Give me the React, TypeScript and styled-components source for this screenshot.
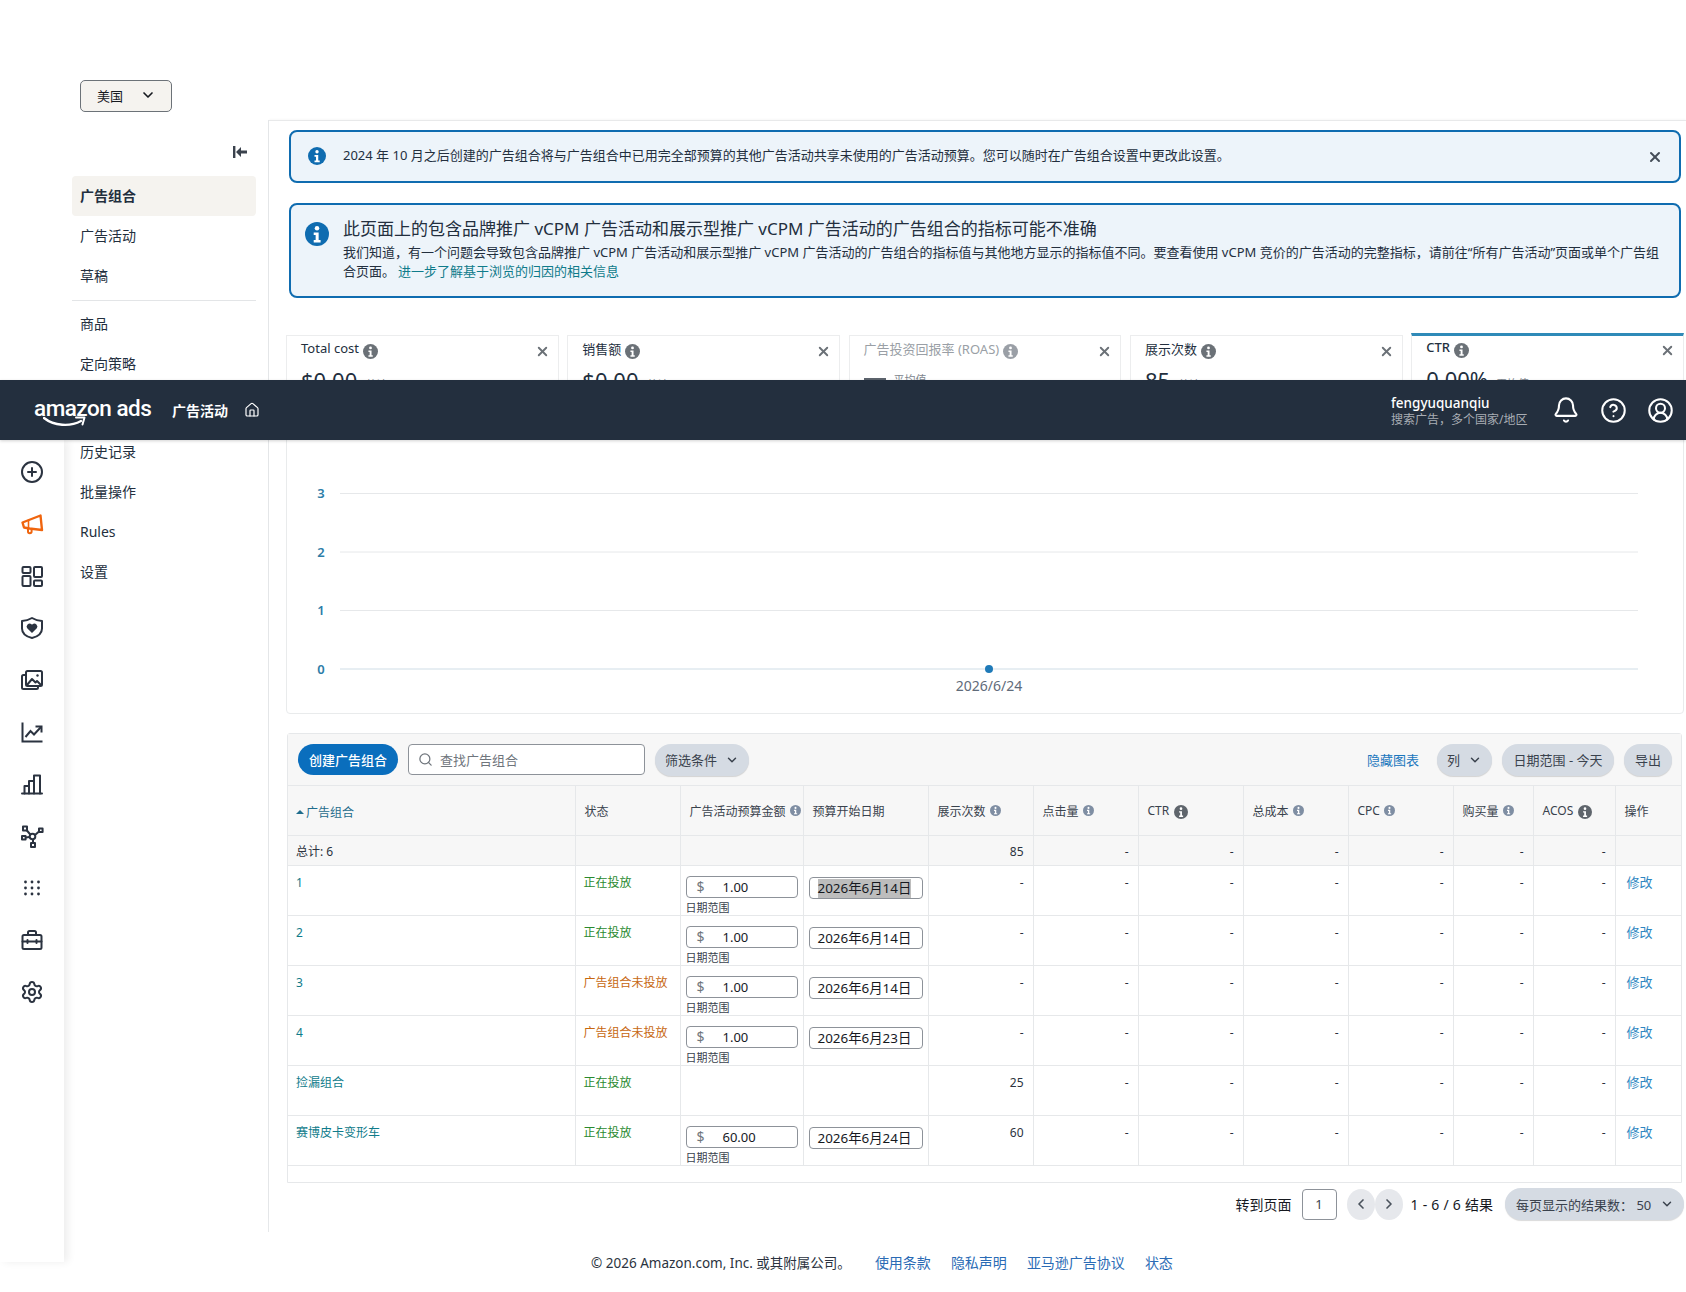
import * as React from 'react';
import styled, { createGlobalStyle } from 'styled-components';
import {
  Bell,
  ChevronDown,
  ChevronLeft,
  ChevronRight,
  CirclePlus,
  CircleHelp,
  CircleUserRound,
  House,
  Search,
  Settings,
  X,
} from 'lucide-react';

const GlobalStyle = createGlobalStyle`
  html, body {
    margin: 0;
    padding: 0;
    background: #fff;
  }
  body {
    font-family: "Noto Sans", "Noto Sans CJK SC", sans-serif;
    font-size: 13px;
    color: #16191f;
  }
  * {
    box-sizing: border-box;
  }
`;

const Page = styled.div`
  position: relative;
  width: 1686px;
  height: 1292px;
  overflow: hidden;
`;

/* top header, sits over the scrolled content */
const Header = styled.header`
  position: absolute;
  top: 380px;
  left: 0;
  right: 0;
  height: 60px;
  background: #232f3e;
  box-shadow: 0 1px 3px rgba(0, 0, 0, 0.18);
  display: flex;
  align-items: center;
  padding: 0 12px 0 34px;
  color: #fff;
  z-index: 3;
`;

const Logo = styled.div`
  position: relative;
  width: 116px;
  height: 46px;
  margin-right: 22px;
`;

const LogoText = styled.span`
  display: block;
  font-family: Roboto, "Liberation Sans", sans-serif;
  font-size: 22.5px;
  font-weight: 500;
  letter-spacing: -0.5px;
  line-height: 42px;
  white-space: nowrap;
`;

const LogoSmile = styled.svg`
  position: absolute;
  left: 9px;
  top: 29px;
`;

const HeaderTitle = styled.span`
  font-size: 14px;
  font-weight: 700;
  margin-right: 16px;
`;

const HeaderSpacer = styled.div`
  flex: 1;
`;

const Account = styled.div`
  display: flex;
  flex-direction: column;
  margin: 2px 24px 0 0;
  width: 137px;
`;

const AccountName = styled.span`
  font-size: 13.5px;
  line-height: 16px;
  font-weight: 500;
`;

const AccountSub = styled.span`
  font-size: 12px;
  line-height: 16px;
  margin-top: 1px;
  color: #a8adb4;
  white-space: nowrap;
`;

const HeaderIcons = styled.div`
  display: flex;
  align-items: center;
  gap: 20px;
`;

/* left icon rail */
const Rail = styled.nav`
  position: absolute;
  top: 440px;
  left: 0;
  width: 64px;
  height: 822px;
  background: #fff;
  box-shadow: 4px 0 8px rgba(0, 0, 0, 0.07);
  padding-top: 6px;
  z-index: 2;
`;

const RailItem = styled.div<{ $active?: boolean }>`
  height: 52px;
  display: flex;
  align-items: center;
  justify-content: center;
  color: ${({ $active }) => ($active ? '#f0650e' : '#2b3340')};
`;

const TopBar = styled.div`
  height: 120px;
  padding: 80px 0 0 80px;
`;

const CountrySelect = styled.div`
  width: 92px;
  height: 32px;
  display: flex;
  align-items: center;
  justify-content: space-between;
  padding: 0 15px 2px 16px;
  background: #f5f3ef;
  border: 1px solid #6c7278;
  border-radius: 5px;
  font-size: 13px;
`;

const Body = styled.div`
  display: flex;
  align-items: flex-start;
`;

const SubNav = styled.aside`
  width: 269px;
  height: 1112px;
  flex-shrink: 0;
  padding: 26px 12px 0 72px;
  border-right: 1px solid #e6e8ea;
`;

const CollapseRow = styled.div`
  display: flex;
  justify-content: flex-end;
  padding-right: 9px;
  height: 30px;
  color: #3a424d;
`;

const NavItem = styled.div<{ $active?: boolean }>`
  height: 40px;
  display: flex;
  align-items: center;
  padding: 0 0 2px 8px;
  border-radius: 4px;
  font-size: 14px;
  font-weight: ${({ $active }) => ($active ? 700 : 400)};
  background: ${({ $active }) => ($active ? '#f5f3ef' : 'transparent')};
  color: #232f3e;
`;

const NavDivider = styled.hr<{ $gap: number }>`
  border: none;
  border-top: 1px solid #e3e5e7;
  margin: ${({ $gap }) => $gap}px 0 3px;
`;

const Main = styled.main`
  flex: 1;
  min-width: 0;
  border-top: 1px solid #e8e9ea;
  box-shadow: 0 -1px 2px rgba(0, 0, 0, 0.03);
  padding: 9px 2px 0 17px;
`;

const Alert = styled.div<{ $large?: boolean }>`
  margin: ${({ $large }) => ($large ? '20px 3px 37px' : '0 3px')};
  height: ${({ $large }) => ($large ? '95px' : '53px')};
  display: flex;
  align-items: ${({ $large }) => ($large ? 'flex-start' : 'center')};
  padding: ${({ $large }) => ($large ? '12px 17px 0 14px' : '0 16px 2px 17px')};
  gap: ${({ $large }) => ($large ? '14px' : '17px')};
  background: #edf4fa;
  border: 2px solid #0f6cb0;
  border-radius: 8px;
`;

const LargeIconSlot = styled.div`
  margin-top: 5px;
`;

const AlertBody = styled.div`
  flex: 1;
  min-width: 0;
`;

const AlertTitle = styled.div`
  font-size: 17px;
  line-height: 24px;
  margin-bottom: 2px;
  font-weight: 400;
  color: #232f3e;
`;

const AlertText = styled.div`
  font-size: 13px;
  line-height: 19px;
  color: #232f3e;
`;

const AlertLink = styled.a`
  color: #0f7b8a;
  margin-left: 3px;
`;

const AlertClose = styled.div`
  color: #444c57;
  display: flex;
  margin-top: 2px;
`;

const Metrics = styled.section`
  display: grid;
  grid-template-columns: repeat(5, 1fr);
  gap: 8.5px;
  height: 87px;
  align-items: stretch;
`;

const MetricCard = styled.div<{ $selected?: boolean; $muted?: boolean }>`
  position: relative;
  margin-top: ${({ $selected }) => ($selected ? '-2px' : '0')};
  padding: ${({ $selected }) => ($selected ? '5px 8px 0 14px' : '6px 8px 0 14px')};
  border: 1px solid #ecedee;
  border-bottom: none;
  border-top: ${({ $selected }) => ($selected ? '3px solid #2f8ab8' : '1px solid #ecedee')};
  color: ${({ $muted }) => ($muted ? '#9a9fa6' : '#232f3e')};
`;

const MetricHead = styled.div`
  display: flex;
  align-items: center;
  height: 19px;
  gap: 4px;
  font-size: 13px;
`;

const MetricLabel = styled.span<{ $selected?: boolean }>`
  margin-bottom: 7px;
  font-weight: ${({ $selected }) => ($selected ? 500 : 400)};
`;

const MetricClose = styled.div`
  margin-left: auto;
  display: flex;
  color: #6b7177;
`;

const MetricValue = styled.div`
  margin-top: 3px;
  display: flex;
  align-items: baseline;
  gap: 8px;
  font-size: 22px;
  line-height: 32px;
`;

const MetricNote = styled.span`
  font-size: 11px;
  color: #80868e;
`;

const MetricDash = styled.span`
  width: 22px;
  height: 3px;
  background: #5d646d;
  align-self: center;
  margin-bottom: 2px;
`;

const ChartPanel = styled.section`
  border: 1px solid #e9ebec;
  border-radius: 0 0 4px 4px;
  height: 292px;
`;

const ChartSvg = styled.svg`
  display: block;
  font-family: "Noto Sans", sans-serif;
`;

const TablePanel = styled.section`
  margin: 19px 2px 0 1px;
  border: 1px solid #e6e8ea;
  border-radius: 3px 3px 0 0;
`;

const Toolbar = styled.div`
  height: 51px;
  display: flex;
  align-items: center;
  gap: 10px;
  padding: 0 9px 0 10px;
  background: #f7f7f7;
`;

const CreateButton = styled.div`
  width: 100px;
  height: 31px;
  display: flex;
  align-items: center;
  justify-content: center;
  border-radius: 16px;
  background: #0a6ebd;
  color: #fff;
  font-size: 13px;
  font-weight: 500;
`;

const SearchBox = styled.div`
  width: 237px;
  height: 31px;
  display: flex;
  align-items: center;
  gap: 7px;
  padding: 0 9px;
  background: #fff;
  border: 1px solid #8d9299;
  border-radius: 4px;
  color: #6f757c;
  font-size: 13px;
`;

const Pill = styled.div<{ $width: number }>`
  width: ${({ $width }) => $width}px;
  height: 32px;
  display: flex;
  align-items: center;
  justify-content: center;
  gap: 8px;
  border-radius: 16px;
  background: #d5dbe3;
  box-shadow: 0 1px 1px rgba(0, 0, 0, 0.15);
  color: #3a424d;
  font-size: 13px;
  white-space: nowrap;
`;

const ToolbarSpacer = styled.div`
  flex: 1;
`;

const TextLink = styled.a`
  color: #1a76bd;
  font-size: 13px;
  margin-right: 8px;
`;

const Table = styled.table`
  width: 100%;
  table-layout: fixed;
  border-collapse: collapse;
`;

const HeadCell = styled.th`
  height: 50px;
  padding: 0 0 0 9px;
  background: #f7f7f7;
  border: 1px solid #e6e8ea;
  border-left: none;
  font-size: 12px;
  font-weight: 400;
  text-align: left;
  color: #39424d;
  white-space: nowrap;
  &:first-child {
    padding-left: 8px;
  }
  &:last-child {
    border-right: none;
  }
`;

const HeadInner = styled.span<{ $sorted?: boolean }>`
  display: inline-flex;
  align-items: center;
  gap: 4px;
  color: ${({ $sorted }) => ($sorted ? '#1f6c8c' : 'inherit')};
`;

const HeadIconSlot = styled.span`
  margin: 3px 0 0 1px;
`;

const SortMark = styled.span`
  width: 0;
  height: 0;
  margin-right: -2px;
  border-left: 4px solid transparent;
  border-right: 4px solid transparent;
  border-bottom: 4px solid #1f6c8c;
`;

const Cell = styled.td<{ $right?: boolean; $total?: boolean }>`
  height: ${({ $total }) => ($total ? '30px' : '50px')};
  padding: ${({ $total }) => ($total ? '2px 8px 0' : '8px 8px 0')};
  ${({ $right }) => ($right ? 'padding-right: 9px;' : '')}
  border: 1px solid #e6e8ea;
  border-left: none;
  background: ${({ $total }) => ($total ? '#f7f7f7' : '#fff')};
  vertical-align: ${({ $total }) => ($total ? 'middle' : 'top')};
  text-align: ${({ $right }) => ($right ? 'right' : 'left')};
  font-size: 12px;
  line-height: 18px;
  color: #2b3340;
  &:last-child {
    border-right: none;
  }
`;

const InputCell = styled(Cell)`
  padding: 10px 6px 0 5px;
`;

const EditCell = styled(Cell)`
  padding: 7px 0 0 11px;
`;

const CellLink = styled.a`
  color: #0f7b8a;
`;

const EditLink = styled.a`
  color: #2e86c1;
  font-size: 13px;
`;

const Status = styled.span<{ $live?: boolean }>`
  color: ${({ $live }) => ($live ? '#2a8a2f' : '#c7670f')};
`;

const BudgetInput = styled.div`
  width: 112px;
  height: 22px;
  display: flex;
  align-items: center;
  padding-left: 10px;
  border: 1px solid #8d9299;
  border-radius: 4px;
  font-size: 13px;
  color: #16191f;
`;

const Dollar = styled.span`
  width: 26px;
  font-size: 14px;
  color: #6f757c;
`;

const BudgetNote = styled.div`
  height: 16px;
  font-size: 11px;
  line-height: 19px;
  color: #39424d;
`;

const DateInput = styled.div`
  width: 114px;
  height: 22px;
  margin-top: 1px;
  display: flex;
  align-items: flex-end;
  padding-left: 8px;
  border: 1px solid #8d9299;
  border-radius: 4px;
  font-size: 13.4px;
  line-height: 19px;
  color: #16191f;
`;

const DateText = styled.span<{ $selected?: boolean }>`
  background: ${({ $selected }) => ($selected ? '#bdbdbd' : 'transparent')};
  white-space: nowrap;
`;

const TableFoot = styled.div`
  height: 16px;
`;

const Pager = styled.div`
  margin: 5px 0 0;
  display: flex;
  justify-content: flex-end;
  align-items: center;
  height: 32px;
  font-size: 14px;
  white-space: nowrap;
`;

const PagerLabel = styled.span`
  margin-right: 10px;
`;

const PageInput = styled.div`
  width: 35px;
  height: 31px;
  margin-right: 10px;
  display: flex;
  align-items: center;
  justify-content: center;
  border: 1px solid #8d9299;
  border-radius: 4px;
  color: #3a424d;
  font-size: 13px;
`;

const PageArrow = styled.div`
  width: 28px;
  height: 31px;
  display: flex;
  align-items: center;
  justify-content: center;
  border-radius: 50%;
  background: #e6e8ec;
  color: #4a525c;
`;

const PagerCount = styled.span`
  margin: 0 12px 0 8px;
  word-spacing: 0.5px;
`;

const PageSize = styled(Pill)`
  gap: 7px;
  padding: 0 10px 0 11px;
  justify-content: space-between;
`;

const Footer = styled.footer`
  position: absolute;
  top: 1252px;
  left: 591px;
  display: flex;
  align-items: center;
  gap: 20px;
  font-size: 14px;
  line-height: 22px;
  white-space: nowrap;
`;

const Copyright = styled.span`
  color: #2b3340;
  font-size: 13.5px;
  margin-right: 4px;
`;

const FooterLink = styled.a`
  color: #2a6bb5;
`;

const InfoGlyph = styled.svg`
  flex-shrink: 0;
  display: block;
`;

const InfoIcon = ({ size, color }: { size: number; color: string }) => (
  <InfoGlyph width={size} height={size} viewBox='0 0 16 16'>
    <circle cx='8' cy='8' r='8' fill={color} />
    <circle cx='8' cy='4.2' r='1.5' fill='#fff' />
    <path d='M5.8 7h3.3v5h1.3v1.6H5.8V12h1.3V8.6H5.8z' fill='#fff' />
  </InfoGlyph>
);

const iconProps = {
  width: 24,
  height: 24,
  viewBox: '0 0 24 24',
  fill: 'none',
  stroke: 'currentColor',
  strokeWidth: 2,
  strokeLinecap: 'round' as const,
  strokeLinejoin: 'round' as const,
};

const MegaphoneIcon = () => (
  <svg {...iconProps} strokeWidth={2.4}>
    <path d='M2.5 10.5 20.5 3.5 22 18l-12.5-1.5-5.5-1z' />
    <path d='M8 16v3.5a1.8 1.8 0 0 0 3.6 0V17' strokeWidth={2} />
    <path d='M8.5 8v8' strokeWidth={1.6} />
  </svg>
);

const TilesIcon = () => (
  <svg {...iconProps}>
    <rect x='2.5' y='3' width='8' height='6' rx='1' />
    <rect x='14' y='3' width='8' height='10' rx='1' />
    <rect x='2.5' y='12' width='8' height='10' rx='1' />
    <rect x='14' y='16.5' width='8' height='5.5' rx='1' />
  </svg>
);

const ShieldHeartIcon = () => (
  <svg {...iconProps}>
    <path d='M12 2c3 1.8 6.5 2.8 10 3v7.5c0 4.6-3.9 8-10 9.5-6.1-1.5-10-4.9-10-9.5V5c3.5-.2 7-1.2 10-3z' />
    <path
      d='M12 17 7.2 12.3a3 3 0 0 1 4.3-4.1l.5.5.5-.5a3 3 0 0 1 4.3 4.1z'
      fill='currentColor'
      stroke='none'
    />
  </svg>
);

const ImagesIcon = () => (
  <svg {...iconProps}>
    <path d='M6 7H3.5A1.5 1.5 0 0 0 2 8.5v11A1.5 1.5 0 0 0 3.5 21h13a1.5 1.5 0 0 0 1.5-1.5V18' />
    <rect x='6' y='3' width='16' height='15' rx='1.5' />
    <path d='m7 17 5-6 3.5 3.5 1.5-1.5 4 4' />
    <circle cx='17.5' cy='7.5' r='1.2' fill='currentColor' stroke='none' />
  </svg>
);

const TrendIcon = () => (
  <svg {...iconProps} strokeLinecap='butt' strokeLinejoin='miter'>
    <path d='M2.5 2.5v19h20' />
    <path d='m5.5 17 5-6 3.5 3.5L21 7' />
    <path d='M15.5 6.5h6v6' />
  </svg>
);

const BarsIcon = () => (
  <svg {...iconProps}>
    <path d='M2 21.5h20' />
    <path d='M4.5 21.5V14h4.5v7.5M9 21.5V9h5v12.5M14 21.5V3.5h6v18' />
  </svg>
);

const NetworkIcon = () => (
  <svg {...iconProps} strokeLinecap='butt'>
    <rect x='3' y='2.5' width='4' height='4' />
    <rect x='19' y='4.5' width='3.6' height='3.6' />
    <rect x='2' y='12' width='3.6' height='3.6' />
    <rect x='11' y='19' width='4' height='4' />
    <circle cx='12.5' cy='12.5' r='2.8' />
    <path d='m6.5 6 3.8 4.5M19 7.5l-4 3.5M5.6 13.4l4-.4M13 15.3V19' />
  </svg>
);

const DotsIcon = () => (
  <svg {...iconProps} stroke='none' fill='currentColor'>
    {[6, 12, 18].flatMap((y) => [5.5, 12, 18.5].map((x) => (
      <circle key={`${x}-${y}`} cx={x} cy={y} r='1.4' />
    )))}
  </svg>
);

const BriefcaseIcon = () => (
  <svg {...iconProps}>
    <rect x='2.5' y='7' width='19' height='14' rx='1.5' />
    <path d='M8 7V4.5A1.5 1.5 0 0 1 9.5 3h5A1.5 1.5 0 0 1 16 4.5V7' />
    <path d='M2.5 13.5h19M7.5 12v3M16.5 12v3' />
  </svg>
);

const CollapseIcon = () => (
  <svg width='14' height='12' viewBox='0 0 14 12' fill='currentColor'>
    <rect x='0' y='0' width='2.4' height='12' />
    <path d='M8 1v3.4h6v3.2H8V11L3 6z' />
  </svg>
);

interface RowI {
  name: string;
  live: boolean;
  budget?: string;
  date?: string;
  selected?: boolean;
  impressions: string;
}

const rows: RowI[] = [
  { name: '1', live: true, budget: '1.00', date: '2026年6月14日', selected: true, impressions: '-' },
  { name: '2', live: true, budget: '1.00', date: '2026年6月14日', impressions: '-' },
  { name: '3', live: false, budget: '1.00', date: '2026年6月14日', impressions: '-' },
  { name: '4', live: false, budget: '1.00', date: '2026年6月23日', impressions: '-' },
  { name: '捡漏组合', live: true, impressions: '25' },
  { name: '赛博皮卡变形车', live: true, budget: '60.00', date: '2026年6月24日', impressions: '60' },
];

const metricColumns = [
  { label: '点击量' },
  { label: 'CTR', strong: true },
  { label: '总成本' },
  { label: 'CPC' },
  { label: '购买量' },
  { label: 'ACOS', strong: true },
];

const columnWidths = [287, 105, 123, 125, 105, 105, 105, 105, 105, 80, 82, 66];

const metrics = [
  { label: 'Total cost', value: '$0.00', note: '总计' },
  { label: '销售额', value: '$0.00', note: '总计' },
  { label: '广告投资回报率 (ROAS)', note: '平均值', muted: true },
  { label: '展示次数', value: '85', note: '总计' },
  { label: 'CTR', value: '0.00%', note: '平均值', selected: true },
];

const gridLines = [
  { label: '3', y: 70.5 },
  { label: '2', y: 129 },
  { label: '1', y: 187.5 },
  { label: '0', y: 246 },
];

const App = () => (
  <Page>
    <GlobalStyle />
    <TopBar>
      <CountrySelect>
        美国
        <ChevronDown size={16} strokeWidth={2.5} />
      </CountrySelect>
    </TopBar>
    <Body>
      <SubNav>
        <CollapseRow>
          <CollapseIcon />
        </CollapseRow>
        <NavItem $active>广告组合</NavItem>
        <NavItem>广告活动</NavItem>
        <NavItem>草稿</NavItem>
        <NavDivider $gap={4} />
        <NavItem>商品</NavItem>
        <NavItem>定向策略</NavItem>
        <NavDivider $gap={44} />
        <NavItem>历史记录</NavItem>
        <NavItem>批量操作</NavItem>
        <NavItem>Rules</NavItem>
        <NavItem>设置</NavItem>
      </SubNav>
      <Main>
        <Alert>
          <InfoIcon size={18} color='#0f6cb0' />
          <AlertBody>
            <AlertText>
              2024 年 10 月之后创建的广告组合将与广告组合中已用完全部预算的其他广告活动共享未使用的广告活动预算。您可以随时在广告组合设置中更改此设置。
            </AlertText>
          </AlertBody>
          <AlertClose>
            <X size={16} strokeWidth={3} />
          </AlertClose>
        </Alert>
        <Alert $large>
          <LargeIconSlot>
            <InfoIcon size={24} color='#0f6cb0' />
          </LargeIconSlot>
          <AlertBody>
            <AlertTitle>此页面上的包含品牌推广 vCPM 广告活动和展示型推广 vCPM 广告活动的广告组合的指标可能不准确</AlertTitle>
            <AlertText>
              我们知道，有一个问题会导致包含品牌推广 vCPM 广告活动和展示型推广 vCPM 广告活动的广告组合的指标值与其他地方显示的指标值不同。要查看使用 vCPM 竞价的广告活动的完整指标，请前往“所有广告活动”页面或单个广告组合页面。
              <AlertLink>进一步了解基于浏览的归因的相关信息</AlertLink>
            </AlertText>
          </AlertBody>
        </Alert>
        <Metrics>
          {metrics.map((metric) => (
            <MetricCard key={metric.label} $selected={metric.selected} $muted={metric.muted}>
              <MetricHead>
                <MetricLabel $selected={metric.selected}>{metric.label}</MetricLabel>
                <InfoIcon size={15} color={metric.muted ? '#9a9fa6' : '#6b7177'} />
                <MetricClose>
                  <X size={15} strokeWidth={3} />
                </MetricClose>
              </MetricHead>
              <MetricValue>
                {metric.value ?? <MetricDash />}
                <MetricNote>{metric.note}</MetricNote>
              </MetricValue>
            </MetricCard>
          ))}
        </Metrics>
        <ChartPanel>
          <ChartSvg width='1396' height='290' viewBox='0 0 1396 290'>
            {gridLines.map((line) => (
              <g key={line.label}>
                <line
                  x1='53'
                  x2='1351'
                  y1={line.y}
                  y2={line.y}
                  stroke={line.label === '0' ? '#cfdde6' : '#e6e8ea'}
                  strokeWidth='1'
                />
                <text x='34' y={line.y + 4.5} textAnchor='middle' fontSize='13' fontWeight='600' fill='#2c7da8'>
                  {line.label}
                </text>
              </g>
            ))}
            <circle cx='702' cy='246' r='4' fill='#1f7ab8' />
            <text x='702' y='268' textAnchor='middle' fontSize='14' fill='#5f6b7a'>2026/6/24</text>
          </ChartSvg>
        </ChartPanel>
        <TablePanel>
          <Toolbar>
            <CreateButton>创建广告组合</CreateButton>
            <SearchBox>
              <Search size={15} />
              查找广告组合
            </SearchBox>
            <Pill $width={94}>
              筛选条件
              <ChevronDown size={14} strokeWidth={2.5} />
            </Pill>
            <ToolbarSpacer />
            <TextLink>隐藏图表</TextLink>
            <Pill $width={55}>
              列
              <ChevronDown size={14} strokeWidth={2.5} />
            </Pill>
            <Pill $width={112}>日期范围 - 今天</Pill>
            <Pill $width={48}>导出</Pill>
          </Toolbar>
          <Table>
            <colgroup>
              {columnWidths.map((width, index) => (
                <col key={index} width={width} />
              ))}
            </colgroup>
            <thead>
              <tr>
                <HeadCell>
                  <HeadInner $sorted>
                    <SortMark />
                    广告组合
                  </HeadInner>
                </HeadCell>
                <HeadCell>状态</HeadCell>
                <HeadCell>
                  <HeadInner>
                    广告活动预算金额
                    <InfoIcon size={11} color='#7f8ea3' />
                  </HeadInner>
                </HeadCell>
                <HeadCell>预算开始日期</HeadCell>
                <HeadCell>
                  <HeadInner>
                    展示次数
                    <InfoIcon size={11} color='#7f8ea3' />
                  </HeadInner>
                </HeadCell>
                {metricColumns.map((column) => (
                  <HeadCell key={column.label}>
                    <HeadInner>
                      {column.label}
                      {column.strong ? (
                        <HeadIconSlot>
                          <InfoIcon size={14} color='#5f656c' />
                        </HeadIconSlot>
                      ) : (
                        <InfoIcon size={11} color='#7f8ea3' />
                      )}
                    </HeadInner>
                  </HeadCell>
                ))}
                <HeadCell>操作</HeadCell>
              </tr>
            </thead>
            <tbody>
              <tr>
                <Cell $total>总计: 6</Cell>
                <Cell $total />
                <Cell $total />
                <Cell $total />
                <Cell $total $right>85</Cell>
                {metricColumns.map((column) => (
                  <Cell key={column.label} $total $right>-</Cell>
                ))}
                <Cell $total />
              </tr>
              {rows.map((row) => (
                <tr key={row.name}>
                  <Cell>
                    <CellLink>{row.name}</CellLink>
                  </Cell>
                  <Cell>
                    <Status $live={row.live}>{row.live ? '正在投放' : '广告组合未投放'}</Status>
                  </Cell>
                  <InputCell>
                    {row.budget && (
                      <>
                        <BudgetInput>
                          <Dollar>$</Dollar>
                          {row.budget}
                        </BudgetInput>
                        <BudgetNote>日期范围</BudgetNote>
                      </>
                    )}
                  </InputCell>
                  <InputCell>
                    {row.date && (
                      <DateInput>
                        <DateText $selected={row.selected}>{row.date}</DateText>
                      </DateInput>
                    )}
                  </InputCell>
                  <Cell $right>{row.impressions}</Cell>
                  {metricColumns.map((column) => (
                    <Cell key={column.label} $right>-</Cell>
                  ))}
                  <EditCell>
                    <EditLink>修改</EditLink>
                  </EditCell>
                </tr>
              ))}
            </tbody>
          </Table>
          <TableFoot />
        </TablePanel>
        <Pager>
          <PagerLabel>转到页面</PagerLabel>
          <PageInput>1</PageInput>
          <PageArrow>
            <ChevronLeft size={16} strokeWidth={2.5} />
          </PageArrow>
          <PageArrow>
            <ChevronRight size={16} strokeWidth={2.5} />
          </PageArrow>
          <PagerCount>1 - 6 / 6 结果</PagerCount>
          <PageSize $width={179}>
            每页显示的结果数： 50
            <ChevronDown size={14} strokeWidth={2.5} />
          </PageSize>
        </Pager>
      </Main>
    </Body>
    <Header>
      <Logo>
        <LogoText>amazon ads</LogoText>
        <LogoSmile width='44' height='13' viewBox='0 0 44 13' fill='none'>
          <path d='M1 2c10 8 26 9 37 3' stroke='#fff' strokeWidth='2.4' strokeLinecap='round' />
          <path d='M33 1.5h8.5l-2 7' stroke='#fff' strokeWidth='2' strokeLinecap='round' strokeLinejoin='round' />
        </LogoSmile>
      </Logo>
      <HeaderTitle>广告活动</HeaderTitle>
      <House size={16} strokeWidth={1.8} />
      <HeaderSpacer />
      <Account>
        <AccountName>fengyuquanqiu</AccountName>
        <AccountSub>搜索广告，多个国家/地区</AccountSub>
      </Account>
      <HeaderIcons>
        <Bell size={28} strokeWidth={1.8} />
        <CircleHelp size={27} strokeWidth={1.8} />
        <CircleUserRound size={27} strokeWidth={1.8} />
      </HeaderIcons>
    </Header>
    <Rail>
      <RailItem><CirclePlus size={24} /></RailItem>
      <RailItem $active><MegaphoneIcon /></RailItem>
      <RailItem><TilesIcon /></RailItem>
      <RailItem><ShieldHeartIcon /></RailItem>
      <RailItem><ImagesIcon /></RailItem>
      <RailItem><TrendIcon /></RailItem>
      <RailItem><BarsIcon /></RailItem>
      <RailItem><NetworkIcon /></RailItem>
      <RailItem><DotsIcon /></RailItem>
      <RailItem><BriefcaseIcon /></RailItem>
      <RailItem><Settings size={24} /></RailItem>
    </Rail>
    <Footer>
      <Copyright>© 2026 Amazon.com, Inc. 或其附属公司。</Copyright>
      <FooterLink>使用条款</FooterLink>
      <FooterLink>隐私声明</FooterLink>
      <FooterLink>亚马逊广告协议</FooterLink>
      <FooterLink>状态</FooterLink>
    </Footer>
  </Page>
);

export default App;
